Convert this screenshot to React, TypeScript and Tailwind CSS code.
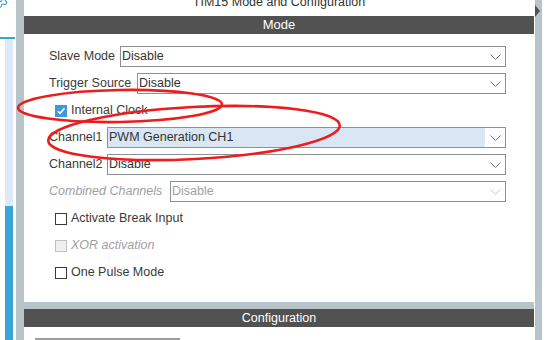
import { Settings } from "lucide-react";

const font = "font-['Liberation_Sans',Arial,sans-serif]";

const Chevron = ({ disabled }: { disabled?: boolean }) => (
  <svg width="11" height="6" viewBox="0 0 11 6" fill="none">
    <path d="M0.5 0.5 L5.5 5.5 L10.5 0.5" stroke={disabled ? "#c8c8c8" : "#6f7173"} strokeWidth="1" />
  </svg>
);

type SelectRow = {
  label: string;
  value: string;
  labelW: string;
  selected?: boolean;
  disabled?: boolean;
};

const SelectField = ({ row }: { row: SelectRow }) => (
  <div className="flex items-center h-[27px] shrink-0">
    <span
      className={`${row.labelW} shrink-0 whitespace-nowrap ${
        row.disabled ? "italic text-[#a0a0a0]" : "text-[#3a3a3a]"
      }`}
    >
      {row.label}
    </span>
    <div className="flex-1 h-[21px] border border-[#8e9194] flex items-stretch bg-white">
      <div
        className={`flex-1 flex items-center pl-[1px] ${row.selected ? "bg-[#d9e7f4]" : ""} ${
          row.disabled ? "text-[#a0a0a0]" : "text-[#333]"
        }`}
      >
        {row.value}
      </div>
      <div className="w-[20px] flex items-center justify-center">
        <Chevron disabled={row.disabled} />
      </div>
    </div>
  </div>
);

const CheckField = ({
  label,
  checked,
  disabled,
}: {
  label: string;
  checked?: boolean;
  disabled?: boolean;
}) => (
  <div className="flex items-center h-[27px] shrink-0 pl-[6px] gap-[4px]">
    {checked ? (
      <div className="w-[12px] h-[12px] bg-[#3d9ad9] flex items-center justify-center">
        <svg width="10" height="10" viewBox="0 0 10 10" fill="none">
          <path d="M1.8 5.2 L4 7.4 L8.4 2.4" stroke="white" strokeWidth="1.6" />
        </svg>
      </div>
    ) : disabled ? (
      <div className="w-[12px] h-[12px] border border-[#c2c2c2] bg-[#efefef]" />
    ) : (
      <div className="w-[12px] h-[12px] border border-[#3a3a3a] bg-white" />
    )}
    <span className={disabled ? "italic text-[#a0a0a0]" : "text-[#3a3a3a]"}>{label}</span>
  </div>
);

const selects: SelectRow[] = [
  { label: "Slave Mode", value: "Disable", labelW: "w-[71px]" },
  { label: "Trigger Source", value: "Disable", labelW: "w-[88px]" },
];

const channels: SelectRow[] = [
  { label: "Channel1", value: "PWM Generation CH1", labelW: "w-[58px]", selected: true },
  { label: "Channel2", value: "Disable", labelW: "w-[58px]" },
  { label: "Combined Channels", value: "Disable", labelW: "w-[121px]", disabled: true },
];

export default function App() {
  return (
    <div className={`relative w-[557px] h-[340px] overflow-hidden flex bg-white text-[12.5px] ${font}`}>
      {/* left strip */}
      <div className="w-[16px] shrink-0 flex flex-col">
        <div className="h-[37px] shrink-0 relative">
          <Settings className="absolute -left-[10px] -top-[10px] text-[#3aa0d8]" size={19} strokeWidth={1.6} />
        </div>
        <div className="h-[2px] shrink-0 w-[15px] bg-[#3aa3db]" />
        <div className="flex-1 flex flex-col pl-[5px] w-[13px]">
          <div className="flex-1 bg-[#dde9f4]" />
          <div className="h-[134px] shrink-0 bg-[#3aa5db]" />
        </div>
      </div>

      {/* main area */}
      <div className="w-[518px] shrink-0 bg-[#b9c4ca] pl-[8px] flex flex-col">
        <div className="h-[302px] shrink-0 bg-white flex flex-col">
          <div className="h-[16px] shrink-0 overflow-hidden">
            <div className="-mt-[6px] leading-[16px] text-center text-[#333]">TIM15 Mode and Configuration</div>
          </div>
          <div className="h-[18px] shrink-0 bg-[#505150] text-white text-[13px] flex items-center justify-center">Mode</div>
          <div className="pt-[9px] pl-[25px] pr-[28px] flex flex-col">
            {selects.map((r) => (
              <SelectField key={r.label} row={r} />
            ))}
            <CheckField label="Internal Clock" checked />
            {channels.map((r) => (
              <SelectField key={r.label} row={r} />
            ))}
            <CheckField label="Activate Break Input" />
            <CheckField label="XOR activation" disabled />
            <CheckField label="One Pulse Mode" />
          </div>
        </div>
        <div className="h-[7px] shrink-0" />
        <div className="h-[18px] shrink-0 bg-[#505150] text-white flex items-center justify-center">Configuration</div>
        <div className="flex-1 min-h-0 overflow-hidden bg-white pl-[11px] pt-[11px]">
          <div className="w-[145px] h-[4px] bg-[#9c9c9c]" />
        </div>
      </div>

      <div className="w-[1px] shrink-0 bg-white" />
      <div className="w-[7px] shrink-0 bg-[#b9c4ca] pt-[5px]">
        <div className="w-0 h-0 border-y-[6px] border-y-transparent border-l-[5px] border-l-[#505150]" />
      </div>
      <div className="flex-1 bg-white" />

      {/* red annotation ellipses */}
      <svg className="absolute inset-0 pointer-events-none" width="557" height="340">
        <ellipse cx="120" cy="106" rx="102" ry="16" fill="none" stroke="#ee1c1c" strokeWidth="2.6" transform="rotate(-1 120 106)" />
        <ellipse cx="194" cy="133" rx="146" ry="26" fill="none" stroke="#ee1c1c" strokeWidth="2.6" transform="rotate(-3 194 133)" />
      </svg>
    </div>
  );
}
